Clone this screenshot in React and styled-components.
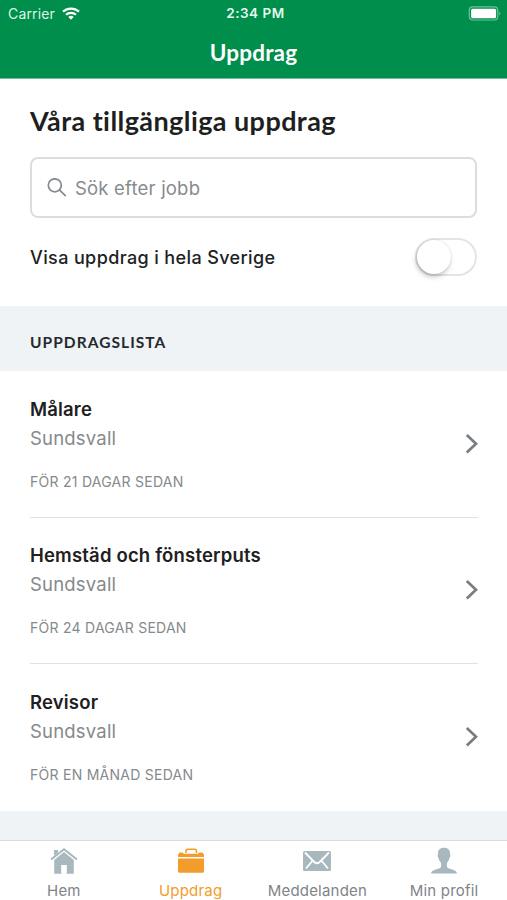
import React from 'react';
import styled, { createGlobalStyle } from "styled-components";

const GlobalStyle = createGlobalStyle`
  * {
    box-sizing: border-box;
  }

  body {
    margin: 0;
    background: #fff;
    font-family: Inter, "Liberation Sans", sans-serif;
  }
`;

const Screen = styled.div`
  width: 100%;
  height: 900px;
  display: flex;
  flex-direction: column;
  overflow: hidden;
  background: #fff;
`;

const Header = styled.header`
  height: 79px;
  flex: none;
  color: #fff;
  background: #008e4c;
  border-bottom: 1px solid #6fbd97;
`;

const StatusBar = styled.div`
  height: 27px;
  padding: 0 6px 0 8px;
  display: grid;
  grid-template-columns: 1fr auto 1fr;
  align-items: center;
  font-size: 14px;
  line-height: 27px;
`;

const Carrier = styled.div`
  display: flex;
  align-items: center;
  gap: 7px;
  letter-spacing: 0.15px;
  color: #dcf5e7;
`;

const Clock = styled.div`
  padding-left: 2px;
  font-size: 13.5px;
  font-weight: 600;
  letter-spacing: 0.5px;
  color: #e4f8ed;
`;

const Battery = styled.svg`
  justify-self: end;
`;

const HeaderTitle = styled.h1`
  margin: 10px 0 0;
  font-family: Lato, sans-serif;
  font-size: 22.5px;
  font-weight: 700;
  line-height: 32px;
  letter-spacing: 0.2px;
  text-align: center;
`;

const Filters = styled.section`
  height: 227px;
  flex: none;
  padding: 26px 30px 0;
`;

const Title = styled.h2`
  margin: 0 0 20px;
  font-family: Lato, sans-serif;
  font-size: 27px;
  font-weight: 700;
  line-height: 32px;
  letter-spacing: 0.42px;
  white-space: nowrap;
  color: #1d1f20;
`;

const Search = styled.label`
  height: 61px;
  padding: 0 15px;
  display: flex;
  align-items: center;
  gap: 8px;
  border: 2px solid #dadede;
  border-radius: 8px;

  input {
    flex: 1;
    padding: 1px 0 0;
    border: none;
    outline: none;
    background: none;
    font-family: inherit;
    font-size: 18.5px;
    letter-spacing: 0.2px;
    color: #333;

    &::placeholder {
      color: #868b8e;
      opacity: 1;
    }
  }
`;

const ToggleRow = styled.div`
  margin-top: 20px;
  height: 38px;
  display: flex;
  align-items: center;
  justify-content: space-between;
  font-size: 18px;
  font-weight: 500;
  letter-spacing: 0.38px;
  color: #202223;
`;

const Toggle = styled.button`
  width: 62px;
  height: 38px;
  padding: 0;
  border: 2px solid #e3e5e5;
  border-radius: 19px;
  background: #fff;

  span {
    display: block;
    width: 34px;
    height: 34px;
    border-radius: 50%;
    background: #fff;
    box-shadow: -1px 3px 5px rgba(0, 0, 0, 0.22), 0 0 2px rgba(0, 0, 0, 0.12);
  }
`;

const SectionTitle = styled.h3`
  height: 65px;
  flex: none;
  margin: 0;
  padding: 4px 30px 0;
  font-family: Lato, sans-serif;
  font-size: 15.5px;
  font-weight: 700;
  line-height: 65px;
  letter-spacing: 1.05px;
  color: #23292d;
  background: #eff3f6;
`;

const List = styled.ul`
  flex: none;
  height: 440px;
  margin: 0;
  padding: 0 29px 0 30px;
  list-style: none;
`;

const Job = styled.li`
  height: 146.5px;
  display: flex;
  align-items: center;
  justify-content: space-between;
  border-bottom: ${props => props.$last ? 'none' : '1.5px solid #dfe1e2'};
`;

const JobName = styled.div`
  font-size: 18.5px;
  font-weight: 600;
  line-height: 29px;
  letter-spacing: 0.18px;
  color: #1e2021;
`;

const JobCity = styled.div`
  font-size: 18.5px;
  line-height: 29px;
  letter-spacing: 0.2px;
  color: #858a8d;
`;

const JobDate = styled.div`
  margin-top: 18px;
  font-size: 14px;
  line-height: 22px;
  letter-spacing: 0.26px;
  text-transform: uppercase;
  color: #858a8d;
`;

const Footer = styled.div`
  height: 29px;
  flex: none;
  background: #eff3f6;
`;

const TabBar = styled.nav`
  height: 60px;
  flex: none;
  display: grid;
  grid-template-columns: repeat(4, 1fr);
  border-top: 1px solid #d9dddf;
  background: #fff;
`;

const Tab = styled.a`
  padding: 6px 0 0 1px;
  display: flex;
  flex-direction: column;
  align-items: center;
  font-size: 15px;
  line-height: 20px;
  letter-spacing: 0.2px;
  color: ${props => props.$active ? '#f39c2c' : '#7f8487'};

  svg {
    flex: none;
    margin-bottom: 6px;
    color: ${props => props.$active ? '#f39c2c' : '#a8b8be'};
  }
`;

const jobs = [
    { name: 'Målare', city: 'Sundsvall', date: 'För 21 dagar sedan' },
    { name: 'Hemstäd och fönsterputs', city: 'Sundsvall', date: 'För 24 dagar sedan' },
    { name: 'Revisor', city: 'Sundsvall', date: 'För en månad sedan' },
];

const WifiIcon = () => (
    <svg width="18" height="13" viewBox="0 0 18 13" fill="none" stroke="#fff" strokeWidth="2.2">
        <path d="M1 4.6C5.5.5 12.5.5 17 4.6" />
        <path d="M4 7.7c2.8-2.5 7.2-2.5 10 0" />
        <path d="M6.3 10a4 4 0 0 1 5.4 0L9 12.7z" fill="#fff" stroke="none" />
    </svg>
);

const SearchIcon = () => (
    <svg width="20" height="20" viewBox="0 0 20 20" fill="none" stroke="#858a8d" strokeWidth="1.7">
        <circle cx="7.8" cy="7.3" r="6.5" />
        <path d="M12.4 11.9l6.4 6.2" />
    </svg>
);

const Chevron = () => (
    <svg width="13" height="20" viewBox="0 0 13 20" fill="none" stroke="#777d81" strokeWidth="2.7">
        <path d="M1.8 1L11 9.7l-9.2 8.8" />
    </svg>
);

const HomeIcon = () => (
    <svg width="28" height="28" viewBox="0 0 28 28" fill="currentColor">
        <path d="M4 8.7V3h4v2.5z" />
        <path d="M1.2 12.4L14 2.3l12.8 10.1" fill="none" stroke="currentColor" strokeWidth="2" />
        <path d="M14 5L4.2 13v13.7h7v-8.8h5.6v8.8h7V13z" />
    </svg>
);

const BriefcaseIcon = () => (
    <svg width="28" height="28" viewBox="0 0 28 28" fill="currentColor">
        <path d="M9 6V3.7Q9 2.2 10.5 2.2H18Q19.5 2.2 19.5 3.7V6" fill="none" stroke="currentColor" strokeWidth="1.6" />
        <path d="M1 10V8l1.4-2.5h3L7 6.8h14l1.6-1.3h3L27 8v2z" />
        <path d="M1 11.5h26v12.8q0 1.5-1.5 1.5h-23Q1 25.8 1 24.3z" />
    </svg>
);

const MailIcon = () => (
    <svg width="28" height="28" viewBox="0 0 28 28" fill="none">
        <rect y="4" width="28" height="20" rx="1.5" fill="currentColor" />
        <path d="M2 5.5L11.3 15Q14 17.5 16.7 15L26 5.5M3 21.5L9.3 14M25 21.5L18.7 14" stroke="#fff" strokeWidth="1.8" />
    </svg>
);

const ProfileIcon = () => (
    <svg width="28" height="28" viewBox="0 0 28 28" fill="currentColor">
        <path d="M14 .8c-4.2 0-6.2 2.5-6 6.2-.8 1.300-.3 3.500.7 4.200.3 2 1.300 3.500 2.400 4.500v4.200c-1.300 2.600-9.800 2-10.100 6.600h26c-.3-4.600-8.800-4-10.100-6.600v-4.200c1.100-1 2.100-2.500 2.400-4.500 1-.7 1.500-2.900.7-4.200.2-3.700-1.800-6.200-6-6.200z" />
    </svg>
);

function App() {

    return (
        <Screen>
            <GlobalStyle />
            <Header>
                <StatusBar>
                    <Carrier>Carrier <WifiIcon /></Carrier>
                    <Clock>2:34 PM</Clock>
                    <Battery width="33" height="15" viewBox="0 0 33 15">
                        <rect x="1.3" y=".8" width="28.5" height="13.2" rx="3.5" fill="none" stroke="#70c298" strokeWidth="1.2" />
                        <rect x="3.1" y="2.7" width="25" height="9.5" rx="1.5" fill="#fff" />
                        <path d="M31.3 5.2q2 2 0 4.4z" fill="#70c298" />
                    </Battery>
                </StatusBar>
                <HeaderTitle>Uppdrag</HeaderTitle>
            </Header>
            <Filters>
                <Title>Våra tillgängliga uppdrag</Title>
                <Search>
                    <SearchIcon />
                    <input type="text" placeholder="Sök efter jobb" />
                </Search>
                <ToggleRow>
                    Visa uppdrag i hela Sverige
                    <Toggle type="button" aria-label="Visa uppdrag i hela Sverige"><span /></Toggle>
                </ToggleRow>
            </Filters>
            <SectionTitle>UPPDRAGSLISTA</SectionTitle>
            <List>
                {jobs.map((job, index) => (
                    <Job key={job.name} $last={index === jobs.length - 1}>
                        <div>
                            <JobName>{job.name}</JobName>
                            <JobCity>{job.city}</JobCity>
                            <JobDate>{job.date}</JobDate>
                        </div>
                        <Chevron />
                    </Job>
                ))}
            </List>
            <Footer />
            <TabBar>
                <Tab><HomeIcon />Hem</Tab>
                <Tab $active><BriefcaseIcon />Uppdrag</Tab>
                <Tab><MailIcon />Meddelanden</Tab>
                <Tab><ProfileIcon />Min profil</Tab>
            </TabBar>
        </Screen>
    );
}

export default App;
